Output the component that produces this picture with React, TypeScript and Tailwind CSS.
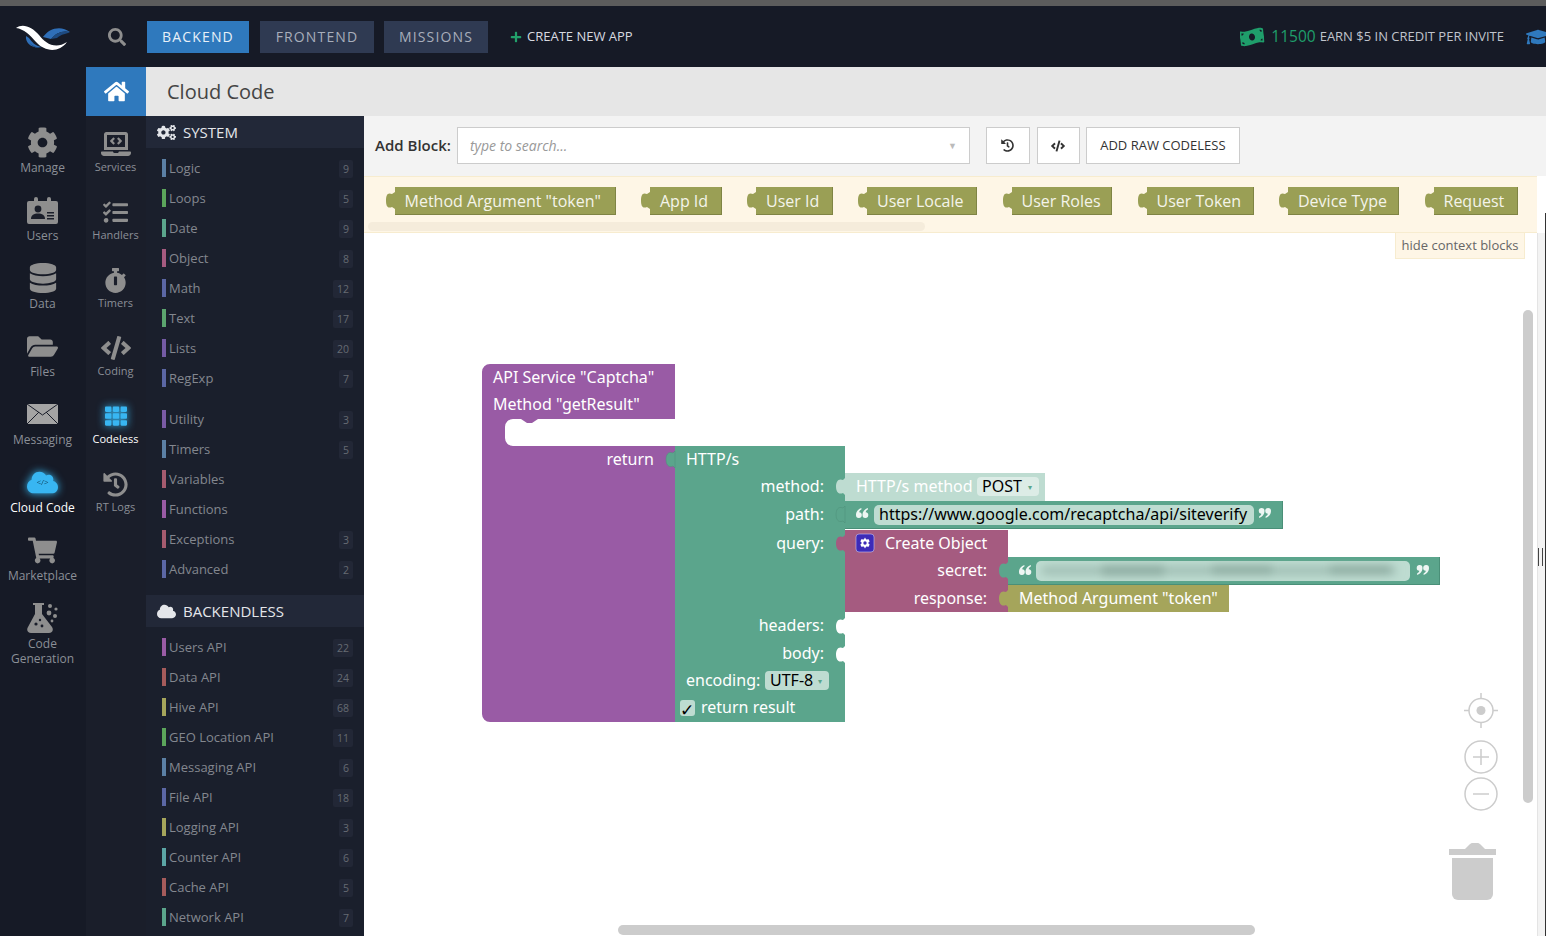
import type { ReactNode } from "react";
import {
  FaCloud,
  FaCode,
  FaCog,
  FaCogs,
  FaDatabase,
  FaFolderOpen,
  FaGraduationCap,
  FaHistory,
  FaHome,
  FaLaptopCode,
  FaMoneyBillWave,
  FaPlus,
  FaSearch,
  FaShoppingCart,
  FaStopwatch,
  FaTasks,
  FaTh,
} from "react-icons/fa";

type NavItem = { label: ReactNode; icon: ReactNode; active?: boolean };
type BlockGroup = { name: string; color: string; count?: number };

const gray = "text-[#8e8e8e]";

const mainNav: NavItem[] = [
  { label: "Manage", icon: <FaCog className={`${gray} text-[31px]`} /> },
  { label: "Users", icon: <UsersIcon /> },
  { label: "Data", icon: <FaDatabase className={`${gray} text-[30px]`} /> },
  { label: "Files", icon: <FaFolderOpen className={`${gray} text-[31px]`} /> },
  { label: "Messaging", icon: <MailIcon /> },
  {
    label: "Cloud Code",
    active: true,
    icon: (
      <span className="relative flex drop-shadow-[0_0_4px_#38bdf8]">
        <FaCloud className="text-[31px] text-[#38b6f2]" />
        <span className="absolute inset-0 flex items-center justify-center text-[8px] text-[#14506e]">{"</>"}</span>
      </span>
    ),
  },
  { label: "Marketplace", icon: <FaShoppingCart className={`${gray} text-[29px]`} /> },
  {
    label: (
      <>
        Code
        <br />
        Generation
      </>
    ),
    icon: <FlaskIcon />,
  },
];

const subNav: NavItem[] = [
  { label: "Services", icon: <FaLaptopCode className={`${gray} text-[30px]`} /> },
  { label: "Handlers", icon: <FaTasks className={`${gray} text-[25px]`} /> },
  { label: "Timers", icon: <FaStopwatch className={`${gray} text-[25px]`} /> },
  { label: "Coding", icon: <FaCode className={`${gray} text-[30px]`} /> },
  {
    label: "Codeless",
    active: true,
    icon: <FaTh className="text-[22px] text-[#38b6f2] drop-shadow-[0_0_4px_#38bdf8]" />,
  },
  { label: "RT Logs", icon: <FaHistory className={`${gray} text-[25px]`} /> },
];

const systemTop: BlockGroup[] = [
  { name: "Logic", color: "#5b80a5", count: 9 },
  { name: "Loops", color: "#5ba55b", count: 5 },
  { name: "Date", color: "#5ba58c", count: 9 },
  { name: "Object", color: "#a55b80", count: 8 },
  { name: "Math", color: "#5b67a5", count: 12 },
  { name: "Text", color: "#5ba56f", count: 17 },
  { name: "Lists", color: "#745ba5", count: 20 },
  { name: "RegExp", color: "#5b67a5", count: 7 },
];

const systemBottom: BlockGroup[] = [
  { name: "Utility", color: "#7a5ba5", count: 3 },
  { name: "Timers", color: "#5b80a5", count: 5 },
  { name: "Variables", color: "#a55b6f" },
  { name: "Functions", color: "#995ba5" },
  { name: "Exceptions", color: "#a55b6f", count: 3 },
  { name: "Advanced", color: "#5b67a5", count: 2 },
];

const backendless: BlockGroup[] = [
  { name: "Users API", color: "#995ba5", count: 22 },
  { name: "Data API", color: "#a55b5b", count: 24 },
  { name: "Hive API", color: "#a5a55b", count: 68 },
  { name: "GEO Location API", color: "#5ba55b", count: 11 },
  { name: "Messaging API", color: "#5b80a5", count: 6 },
  { name: "File API", color: "#5b67a5", count: 18 },
  { name: "Logging API", color: "#a5a55b", count: 3 },
  { name: "Counter API", color: "#5ba5a5", count: 6 },
  { name: "Cache API", color: "#a55b5b", count: 5 },
  { name: "Network API", color: "#5ba58c", count: 7 },
];

const contextBlocks = [
  { label: 'Method Argument "token"', width: "w-[221px]" },
  { label: "App Id", width: "w-[71.5px]" },
  { label: "User Id", width: "w-[76.5px]" },
  { label: "User Locale", width: "w-[110px]" },
  { label: "User Roles", width: "w-[100.5px]" },
  { label: "User Token", width: "w-[107px]" },
  { label: "Device Type", width: "w-[111px]" },
  { label: "Request", width: "w-[84px]" },
];

function UsersIcon() {
  return (
    <svg width="31" height="27" viewBox="0 0 31 27">
      <path d="M2 4h5V2a2 2 0 0 1 4 0v2h9V2a2 2 0 0 1 4 0v2h5a2 2 0 0 1 2 2v19a2 2 0 0 1-2 2H2a2 2 0 0 1-2-2V6a2 2 0 0 1 2-2z" fill="#8e8e8e" />
      <circle cx="11" cy="12" r="3.4" fill="#1a1e2a" />
      <path d="M4 22c0-4 3-5.5 7-5.5s7 1.500 7 5.500z" fill="#1a1e2a" />
      <path d="M20 15h7v1.500h-7zM20 18h7v1.500h-7zM20 21h7v1.500h-7z" fill="#1a1e2a" />
    </svg>
  );
}

function MailIcon() {
  return (
    <svg width="31" height="20" viewBox="0 0 31 20">
      <rect width="31" height="20" fill="#a4a4a4" />
      <path d="M0 0 15.500 11 31 0M0 20 12 8M31 20 19 8" fill="none" stroke="#1a1e2a" strokeWidth="1" />
    </svg>
  );
}

function FlaskIcon() {
  return (
    <svg width="31" height="32" viewBox="0 0 31 32" fill="#8e8e8e">
      <path d="M6 1h11v2h-2v9l10 13c2 3 0 6-3 6H4c-3 0-5-3-3-6l7-13V3H6z" />
      <circle cx="23" cy="4" r="2" />
      <circle cx="29" cy="7" r="1.600" />
      <circle cx="22" cy="11" r="2.400" />
      <circle cx="28" cy="14" r="2" />
      <circle cx="25" cy="19" r="1.400" />
      <circle cx="9" cy="22" r="1.600" fill="#1a1e2a" />
      <circle cx="15" cy="24" r="1.400" fill="#1a1e2a" />
      <circle cx="13" cy="18" r="1.200" fill="#1a1e2a" />
    </svg>
  );
}

function Logo() {
  return (
    <svg width="56" height="28" viewBox="0 0 56 28">
      <path d="M28 13C34 4 46 1 55 8 47 6 41 9 36 15ZM11 12C10 19 17 25 27 23 20 22 17 18 14 14Z" fill="#2f6fb8" />
      <path d="M36 15C41 9 47 6 55 8 52 10 46 10 42 14ZM14 18C17 22 22 24 27 23 22 25 17 23 14 18Z" fill="#1d4a80" />
      <path d="M1 4C8-1 17 3 24 11 30 19 40 26 52 18 44 29 30 28 21 18 15 11 9 5 1 4Z" fill="#fff" />
    </svg>
  );
}

function RailItem({ item, small }: { item: NavItem; small?: boolean }) {
  return (
    <div className={`flex h-[68px] flex-col items-center ${item.active ? "text-white" : "text-[#8b8f97]"}`}>
      <div className={`flex items-center justify-center ${small ? "h-[32px]" : "h-[34px]"}`}>{item.icon}</div>
      <div className={`text-center ${small ? "text-[11px] leading-[13px]" : "mt-[1px] text-[12px] leading-[15px]"}`}>
        {item.label}
      </div>
    </div>
  );
}

function SectionHeader({ icon, title }: { icon: ReactNode; title: string }) {
  return (
    <div className="flex h-8 items-center bg-[#222838] pl-[11px] text-[15px] text-[#e4e6ea]">
      <span className="flex w-[26px] text-[19px]">{icon}</span>
      {title}
    </div>
  );
}

function GroupRow({ group }: { group: BlockGroup }) {
  return (
    <div className="flex h-[30px] items-center pl-4 pr-[11px]">
      <span className="mr-[3px] h-[18px] w-1" style={{ backgroundColor: group.color }} />
      <span className="flex-1 pt-[2px] text-[13px] text-[#83878f]">{group.name}</span>
      {group.count !== undefined && (
        <span className="mt-[2px] rounded-[2px] bg-[#222736] px-1 py-[2px] text-[10.5px] leading-[14px] text-[#666b73]">
          {group.count}
        </span>
      )}
    </div>
  );
}

function Sidebar() {
  return (
    <aside className="w-[218px] shrink-0 bg-[#1a1f2c]">
      <SectionHeader icon={<FaCogs />} title="SYSTEM" />
      <div className="pt-[5px]">
        {systemTop.map((g) => (
          <GroupRow key={g.name} group={g} />
        ))}
      </div>
      <div className="mt-[11px]">
        {systemBottom.map((g) => (
          <GroupRow key={g.name} group={g} />
        ))}
      </div>
      <div className="mt-[11px]">
        <SectionHeader icon={<FaCloud />} title="BACKENDLESS" />
      </div>
      <div className="pt-[5px]">
        {backendless.map((g) => (
          <GroupRow key={g.name} group={g} />
        ))}
      </div>
    </aside>
  );
}

function ContextBlock({ label, width }: { label: string; width: string }) {
  return (
    <div className={`relative flex h-[28px] shrink-0 items-center border-b border-r border-[#7f8444] bg-[#9a9f55] pl-[10px] text-[16px] text-[#f4f4ea] ${width}`}>
      <svg className="absolute left-[-9px] top-[5px]" width="9" height="17" viewBox="0 0 9 17">
        <path d="M9 0 6 2C1 0 0 4 0 8.500S1 17 6 15L9 17z" fill="#9a9f55" />
      </svg>
      <span className="whitespace-nowrap">{label}</span>
    </div>
  );
}

function tabPath(x: number, y: number) {
  return `M${x} ${y}l-2 2c-5-2-7 2-7 6.500s2 8.500 7 6.500l2 2z`;
}

function Label({ x, y, end, dark, children }: { x: number; y: number; end?: boolean; dark?: boolean; children: ReactNode }) {
  return (
    <text x={x} y={y} textAnchor={end ? "end" : "start"} fill={dark ? "#000" : "#fff"} fontSize="16">
      {children}
    </text>
  );
}

// blockly ships these marks as small images, 12x11
function QuoteMark({ x, y, close }: { x: number; y: number; close?: boolean }) {
  const mark = "M0 7C0 3.500 2.500 .8 5.400 0V1.500C4 2.300 3.200 3.200 3.200 4.200A2.900 2.900 0 1 1 0 7Z";
  return (
    <g transform={close ? `translate(${x + 12} ${y + 10}) rotate(180)` : `translate(${x} ${y})`} fill="#eef6f3">
      <path d={mark} />
      <path d={mark} transform="translate(6.500 0)" />
    </g>
  );
}

// the block program, drawn in page coordinates like blockly does on its canvas
function BlockCanvas() {
  const purple = "#995ba5";
  const green = "#5ba58c";
  const rose = "#a55b80";
  const olive = "#a5a55b";
  const light = "#bedcd1";
  return (
    <svg
      className="absolute left-0 top-0"
      width="1182"
      height="820"
      viewBox="364 116 1182 820"
      style={{ fontFamily: '"Noto Sans", sans-serif' }}
    >
      <defs>
        <filter id="smudge" x="-5%" y="-50%" width="110%" height="200%">
          <feGaussianBlur stdDeviation="4" />
        </filter>
      </defs>

      <path
        d="M490 364H675V419H513A8 8 0 0 0 505 427V438A8 8 0 0 0 513 446H675V722H490A8 8 0 0 1 482 714V372A8 8 0 0 1 490 364Z"
        fill={purple}
      />
      <path d="M521 419h17l-6 4h-5z" fill={purple} />

      <rect x="675" y="446" width="170" height="276" fill={green} />
      <path d={tabPath(675, 451)} fill={green} stroke="#4e8f79" strokeWidth="0.5" />

      <rect x="845" y="473" width="200" height="28" fill={light} />
      <path d={tabPath(845, 478)} fill={light} />
      <rect x="977" y="477" width="62" height="19" rx="4" fill="#dcece6" />

      <rect x="845" y="501" width="438" height="28" fill={green} />
      <rect x="845" y="528" width="438" height="1" fill="#4a8f78" />
      <rect x="1282" y="501" width="1" height="28" fill="#4a8f78" />
      <path d={tabPath(845, 506)} fill={green} stroke="#4e8f79" strokeWidth="0.5" />
      <rect x="874" y="505" width="380" height="20" rx="5" fill={light} />

      <rect x="845" y="530" width="163" height="82" fill={rose} />
      <path d={tabPath(845, 535)} fill={rose} />
      <rect x="856" y="534" width="18" height="18" rx="3" fill="#3d2bb8" stroke="#c9c4ee" strokeWidth="0.6" />
      <path
        d="M865 537.5l1.2 2 2.5-.3.9 2.3-1.6 1.500 1.600 1.500-.9 2.300-2.500-.3-1.200 2-1.200-2-2.500.3-.9-2.300 1.600-1.500-1.600-1.500.9-2.300 2.500.3z"
        fill="#fff"
      />
      <circle cx="865" cy="543" r="1.7" fill="#3d2bb8" />

      <rect x="1008" y="557" width="432" height="28" fill={green} />
      <rect x="1008" y="584" width="432" height="1" fill="#4a8f78" />
      <rect x="1439" y="557" width="1" height="28" fill="#4a8f78" />
      <path d={tabPath(1008, 562)} fill={green} />
      <rect x="1036" y="561" width="374" height="20" rx="5" fill={light} />
      <g filter="url(#smudge)" fill="#8fada3">
        <rect x="1042" y="566" width="354" height="9" opacity="0.6" />
        <rect x="1102" y="565" width="62" height="11" />
        <rect x="1212" y="565" width="60" height="10" />
        <rect x="1330" y="565" width="60" height="10" />
      </g>

      <rect x="1008" y="585" width="221" height="27" fill={olive} />
      <path d={tabPath(1008, 590)} fill={olive} />

      <path d={tabPath(845, 618)} fill="#fff" />
      <path d={tabPath(845, 646)} fill="#fff" />

      <rect x="765" y="671" width="64" height="19" rx="4" fill={light} />
      <rect x="680" y="700" width="15" height="16" rx="3" fill={light} />

      <Label x={493} y={383}>API Service "Captcha"</Label>
      <Label x={493} y={410}>Method "getResult"</Label>
      <Label x={654} y={465} end>return</Label>
      <Label x={686} y={465}>HTTP/s</Label>
      <Label x={824} y={492} end>method:</Label>
      <Label x={824} y={520} end>path:</Label>
      <Label x={824} y={549} end>query:</Label>
      <Label x={824} y={631} end>headers:</Label>
      <Label x={824} y={659} end>body:</Label>
      <Label x={686} y={686}>encoding:</Label>
      <Label x={770} y={686} dark>UTF-8</Label>
      <text x="818" y="684" fontSize="8" fill="#5ba58c">▾</text>
      <text x="680" y="716" fontSize="17" fill="#000" style={{ fontFamily: '"DejaVu Sans", sans-serif' }}>✓</text>
      <Label x={701} y={713}>return result</Label>

      <Label x={856} y={492}>HTTP/s method</Label>
      <Label x={982} y={492} dark>POST</Label>
      <text x="1028" y="490" fontSize="8" fill="#5ba58c">▾</text>
      <QuoteMark x={856} y={508} />
      <Label x={879} y={520} dark>https://www.google.com/recaptcha/api/siteverify</Label>
      <QuoteMark x={1259} y={508} close />

      <Label x={885} y={549}>Create Object</Label>
      <Label x={987} y={576} end>secret:</Label>
      <Label x={987} y={604} end>response:</Label>
      <QuoteMark x={1019} y={565} />
      <QuoteMark x={1417} y={565} close />
      <Label x={1019} y={604}>Method Argument "token"</Label>

      {/* workspace controls */}
      <g fill="none" stroke="#ccc" strokeWidth="1.5">
        <circle cx="1481" cy="710.5" r="12" />
        <path d="M1481 693v5M1481 723v5M1464 710.5h5M1493 710.5h5" />
        <circle cx="1481" cy="757" r="16" />
        <path d="M1473 757h16M1481 749v16" />
        <circle cx="1481" cy="794" r="16" />
        <path d="M1473 794h16" />
      </g>
      <circle cx="1481" cy="710.5" r="4.5" fill="#ccc" />
      <path d="M1449 849h16l4-4c1-1 2-2 3-2h6c1 0 2 1 3 2l4 4h11v6h-47z" fill="#ccc" />
      <path d="M1452 858h41v36a6 6 0 0 1-6 6h-29a6 6 0 0 1-6-6z" fill="#ccc" />
    </svg>
  );
}

function Workspace() {
  return (
    <main className="relative flex min-w-0 flex-1 flex-col bg-white">
      <div className="flex h-[60px] shrink-0 items-center bg-[#f3f3f3] pb-[1px] pl-[11px] text-[#333]">
        <span className="mr-[6px] text-[15px] font-semibold">Add Block:</span>
        <div className="flex h-[37px] w-[513px] items-center justify-between border border-[#ccc] bg-white pl-3 pr-3 text-[14px] italic text-[#999]">
          type to search...
          <span className="text-[9px] not-italic text-[#bbb]">▼</span>
        </div>
        <button className="ml-4 flex h-[37px] w-[44px] items-center justify-center border border-[#ccc] bg-white text-[13px]">
          <FaHistory />
        </button>
        <button className="ml-[7px] flex h-[37px] w-[43px] items-center justify-center border border-[#ccc] bg-white text-[14px]">
          <FaCode />
        </button>
        <button className="ml-[6px] h-[37px] w-[154px] border border-[#ccc] bg-white text-[13px]">ADD RAW CODELESS</button>
      </div>

      <div className="relative h-[57px] w-[1173px] shrink-0 border-y border-[#f7eccf] bg-[#fef6e6]">
        <div className="flex gap-[34.5px] pl-[30.5px] pt-[10px]">
          {contextBlocks.map((b) => (
            <ContextBlock key={b.label} label={b.label} width={b.width} />
          ))}
        </div>
        <div className="absolute left-1 top-[45px] h-[9px] w-[557px] rounded-full bg-[#f5ecdb]" />
      </div>

      <div className="absolute right-0 top-[117px] h-[703px] w-[9px] border-l border-[#e4e4e4] bg-[#f3f3f3]" />
      <div className="absolute right-0 top-[97px] h-[723px] w-[1px] bg-[#333]" />
      <div className="absolute right-[3px] top-[432px] h-[18px] w-[5px] border-x border-[#444]" />

      <BlockCanvas />

      <div className="absolute right-[21px] top-[117px] flex h-[26px] w-[130px] items-center justify-center border border-t-0 border-[#f7eccf] bg-[#fef6e6] text-[13px] text-[#666]">
        hide context blocks
      </div>
      <div className="absolute left-[1159px] top-[194px] h-[493px] w-[10px] rounded-full bg-[#ccc]" />
      <div className="absolute left-[254px] top-[809px] h-[10px] w-[637px] rounded-full bg-[#ccc]" />
    </main>
  );
}

export default function App() {
  return (
    <div className="flex h-screen w-full flex-col overflow-hidden bg-[#161a26] font-['Open_Sans',sans-serif]">
      <div className="h-[6px] shrink-0 bg-[#5c5c5c]" />

      <header className="flex h-[61px] shrink-0 items-center">
        <div className="ml-[15px] w-[71px] pt-[2px]">
          <Logo />
        </div>
        <div className="flex w-[61px] justify-center text-[18px] text-[#8e8e8e]">
          <FaSearch />
        </div>
        <button className="h-8 w-[102px] bg-[#2f79bd] text-[14px] tracking-[1.15px] text-[#e8f0f8]">BACKEND</button>
        <button className="ml-[11px] h-8 w-[114px] bg-[#2f3a52] text-[14px] tracking-[1.15px] text-[#a8aebb]">FRONTEND</button>
        <button className="ml-[10px] h-8 w-[104px] bg-[#2f3a52] text-[14px] tracking-[1.15px] text-[#a8aebb]">MISSIONS</button>
        <div className="ml-[22px] flex items-center pt-[1px] text-[13px] text-[#d8dae0]">
          <FaPlus className="mr-[5px] text-[12px] text-[#22a06b]" />
          CREATE NEW APP
        </div>
        <div className="ml-auto flex items-center overflow-hidden pt-[1px] text-[13px] text-[#c0c4cc]">
          <FaMoneyBillWave className="mr-[7px] shrink-0 -rotate-6 text-[24px] text-[#1f9e6b]" />
          <span className="mr-[4px] text-[15.500px] text-[#1f9e6b]">11500</span>
          EARN $5 IN CREDIT PER INVITE
          <FaGraduationCap className="ml-[22px] mr-[-4px] shrink-0 text-[24px] text-[#2f79bd]" />
        </div>
      </header>

      <div className="flex min-h-0 flex-1">
        <nav className="w-[86px] shrink-0 pr-[1px] pt-[58px]">
          {mainNav.map((item, i) => (
            <RailItem key={i} item={item} />
          ))}
        </nav>
        <nav className="w-[60px] shrink-0 bg-[#1a1e2a]">
          <div className="flex h-[49px] items-center justify-center bg-[#2f79bd] text-[25px] text-white">
            <FaHome />
          </div>
          <div className="pr-[1px] pt-[12px]">
            {subNav.map((item, i) => (
              <RailItem key={i} item={item} small />
            ))}
          </div>
        </nav>
        <div className="flex min-w-0 flex-1 flex-col">
          <div className="flex h-[49px] shrink-0 items-center bg-[#e6e6e6] pl-[21px] text-[20px] text-[#444]">Cloud Code</div>
          <div className="flex min-h-0 flex-1">
            <Sidebar />
            <Workspace />
          </div>
        </div>
      </div>
    </div>
  );
}
